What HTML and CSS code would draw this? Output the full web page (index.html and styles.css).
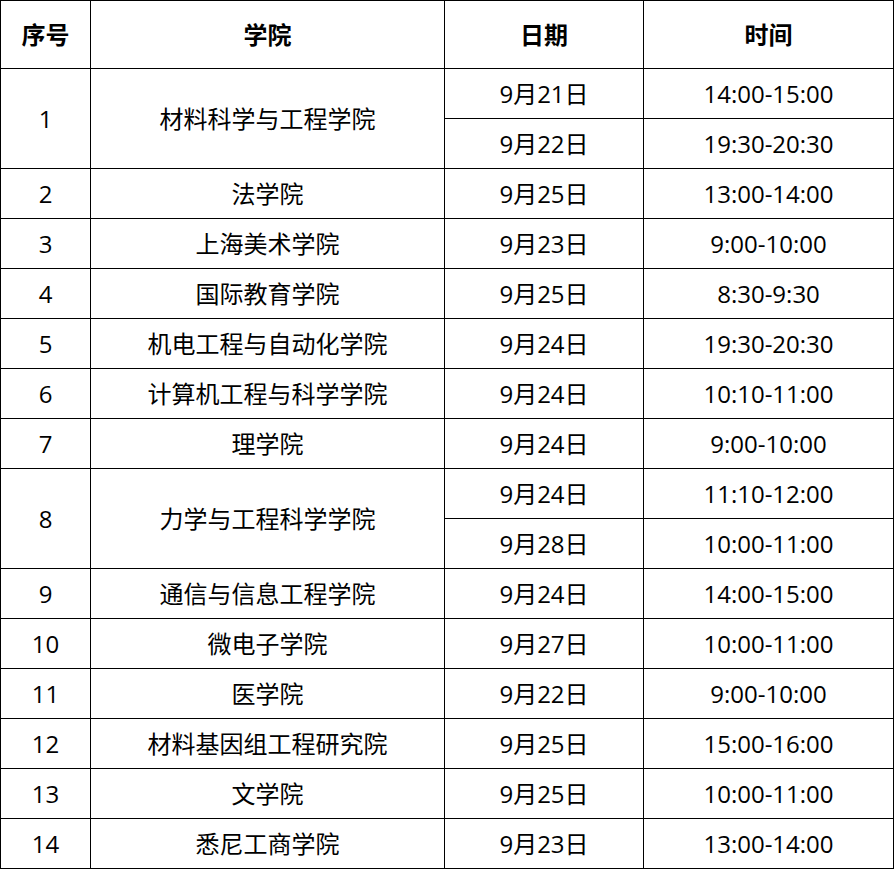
FILE: index.html
```html
<!DOCTYPE html>
<html lang="zh-CN">
<head>
<meta charset="utf-8">
<title>学院安排表</title>
<link rel="stylesheet" href="styles.css">
</head>
<body>
<table class="schedule">
  <colgroup>
    <col class="c-no">
    <col class="c-school">
    <col class="c-date">
    <col class="c-time">
  </colgroup>
  <thead>
    <tr><th>序号</th><th>学院</th><th>日期</th><th>时间</th></tr>
  </thead>
  <tbody>
    <tr><td rowspan="2">1</td><td rowspan="2">材料科学与工程学院</td><td>9月21日</td><td>14:00-15:00</td></tr>
    <tr><td>9月22日</td><td>19:30-20:30</td></tr>
    <tr><td>2</td><td>法学院</td><td>9月25日</td><td>13:00-14:00</td></tr>
    <tr><td>3</td><td>上海美术学院</td><td>9月23日</td><td>9:00-10:00</td></tr>
    <tr><td>4</td><td>国际教育学院</td><td>9月25日</td><td>8:30-9:30</td></tr>
    <tr><td>5</td><td>机电工程与自动化学院</td><td>9月24日</td><td>19:30-20:30</td></tr>
    <tr><td>6</td><td>计算机工程与科学学院</td><td>9月24日</td><td>10:10-11:00</td></tr>
    <tr><td>7</td><td>理学院</td><td>9月24日</td><td>9:00-10:00</td></tr>
    <tr><td rowspan="2">8</td><td rowspan="2">力学与工程科学学院</td><td>9月24日</td><td>11:10-12:00</td></tr>
    <tr><td>9月28日</td><td>10:00-11:00</td></tr>
    <tr><td>9</td><td>通信与信息工程学院</td><td>9月24日</td><td>14:00-15:00</td></tr>
    <tr><td>10</td><td>微电子学院</td><td>9月27日</td><td>10:00-11:00</td></tr>
    <tr><td>11</td><td>医学院</td><td>9月22日</td><td>9:00-10:00</td></tr>
    <tr><td>12</td><td>材料基因组工程研究院</td><td>9月25日</td><td>15:00-16:00</td></tr>
    <tr><td>13</td><td>文学院</td><td>9月25日</td><td>10:00-11:00</td></tr>
    <tr><td>14</td><td>悉尼工商学院</td><td>9月23日</td><td>13:00-14:00</td></tr>
  </tbody>
</table>
</body>
</html>
```
FILE: styles.css
```css
html, body {
  margin: 0;
  padding: 0;
  background: #ffffff;
}

.schedule {
  border-collapse: collapse;
  table-layout: fixed;
  width: 893px;
  font-family: "Open Sans", "Noto Sans CJK SC", sans-serif;
  font-size: 24px;
  color: #000000;
}

.c-no { width: 90px; }
.c-school { width: 354px; }
.c-date { width: 199px; }
.c-time { width: 250px; }

.schedule th,
.schedule td {
  border: 1px solid #000000;
  padding: 0;
  text-align: center;
  vertical-align: middle;
  line-height: 1;
}

.schedule th {
  height: 67px;
  font-weight: 700;
}

.schedule td {
  height: 49px;
  font-weight: 400;
}
```
